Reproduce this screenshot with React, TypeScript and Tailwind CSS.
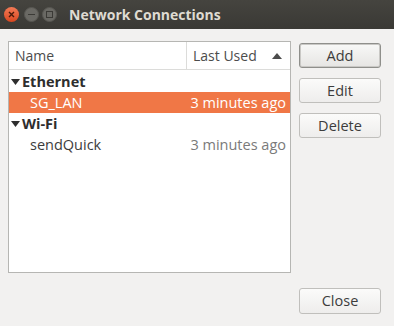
export default function App() {
  const font = { fontFamily: '"Open Sans", "Noto Sans", sans-serif' };
  return (
    <div className="w-[394px] h-[326px] bg-[#f2f1f0] flex flex-col overflow-hidden text-[#3c3c3c]" style={font}>
      {/* Title bar */}
      <div className="h-[29px] bg-gradient-to-b from-[#45443f] to-[#3a3935] flex items-center pl-[4px] shrink-0">
        <div className="w-[15px] h-[15px] rounded-full bg-gradient-to-b from-[#f37a55] to-[#d9461d] flex items-center justify-center">
          <svg width="7" height="7" viewBox="0 0 7 7"><path d="M1 1 L6 6 M6 1 L1 6" stroke="#4a1a0a" strokeWidth="1.4" /></svg>
        </div>
        <div className="ml-[5px] w-[15px] h-[15px] rounded-full bg-[#6a6964] border border-[#585752] flex items-center justify-center">
          <div className="w-[7px] h-[1.5px] bg-[#3b3a36]" />
        </div>
        <div className="ml-[3px] w-[15px] h-[15px] rounded-full bg-[#6a6964] border border-[#585752] flex items-center justify-center">
          <div className="w-[7px] h-[7px] border border-[#3b3a36]" />
        </div>
        <span className="ml-[12px] text-[#dfdbd2] text-[14px] font-bold">Network Connections</span>
      </div>

      {/* Body */}
      <div className="flex-1 flex flex-col px-[8px] pt-[12px]">
        <div className="flex gap-[8px]">
          <div className="w-[283px] h-[232px] bg-white border border-[#b6b6b3] flex flex-col">
            <div className="h-[28px] flex border-b border-[#dcdcda] text-[14px] text-[#4c4c4c]">
              <div className="w-[178px] border-r border-[#dcdcda] flex items-center pl-[6px]">Name</div>
              <div className="flex-1 flex items-center pl-[6px] pr-[8px] justify-between">
                <span>Last Used</span>
                <svg width="10" height="6" viewBox="0 0 10 6"><path d="M0 6 L5 0 L10 6 Z" fill="#4c4c4c" /></svg>
              </div>
            </div>
            <div className="flex flex-col text-[14.5px] pt-[1px]">
              <div className="h-[21px] flex items-center pl-[2px] font-bold text-[#2e2e2e]">
                <svg width="9" height="6" viewBox="0 0 9 6" className="mr-[2px]"><path d="M0 0 L9 0 L4.5 6 Z" fill="#2e2e2e" /></svg>
                Ethernet
              </div>
              <div className="h-[21px] flex items-center justify-between bg-[#f07746] text-white pl-[21px] pr-[4px]">
                <span>SG_LAN</span>
                <span>3 minutes ago</span>
              </div>
              <div className="h-[21px] flex items-center pl-[2px] font-bold text-[#2e2e2e]">
                <svg width="9" height="6" viewBox="0 0 9 6" className="mr-[2px]"><path d="M0 0 L9 0 L4.5 6 Z" fill="#2e2e2e" /></svg>
                Wi-Fi
              </div>
              <div className="h-[21px] flex items-center justify-between pl-[21px] pr-[4px] text-[#3c3c3c]">
                <span>sendQuick</span>
                <span className="text-[#7a7a7a]">3 minutes ago</span>
              </div>
            </div>
          </div>
          <div className="flex flex-col pt-[2px] gap-[10px]">
            <button className="w-[82px] h-[25px] rounded-[3px] border border-[#8f8f8b] bg-gradient-to-b from-[#f8f8f7] to-[#e6e5e3] text-[14.5px] text-[#3c3c3c] shadow-[inset_0_0_0_1px_#c9c8c5]">Add</button>
            <button className="w-[82px] h-[25px] rounded-[3px] border border-[#c0bfbc] bg-gradient-to-b from-[#fbfbfa] to-[#eeedec] text-[14.5px] text-[#3c3c3c]">Edit</button>
            <button className="w-[82px] h-[25px] rounded-[3px] border border-[#c0bfbc] bg-gradient-to-b from-[#fbfbfa] to-[#eeedec] text-[14.5px] text-[#3c3c3c]">Delete</button>
          </div>
        </div>
        <div className="flex justify-end mt-[15px] pr-[5px]">
          <button className="w-[82px] h-[26px] rounded-[3px] border border-[#c0bfbc] bg-gradient-to-b from-[#fbfbfa] to-[#eeedec] text-[14.5px] text-[#3c3c3c]">Close</button>
        </div>
      </div>
    </div>
  );
}
